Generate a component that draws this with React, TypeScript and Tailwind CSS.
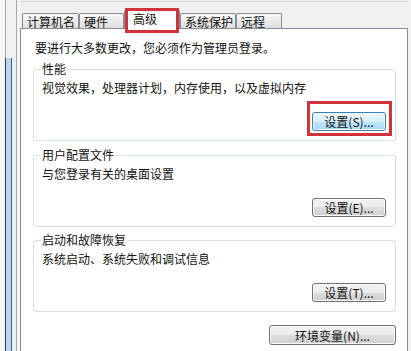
import React from "react";

const font = "font-['Noto_Sans_CJK_SC','Noto_Sans',sans-serif]";

const btnBase =
  "h-[19px] rounded-[3px] border text-[12px] leading-[17px] text-[#111] shadow-[inset_0_0_0_1px_#fbfbfb]";
const btnNormal =
  "border-[#707070] bg-[linear-gradient(to_bottom,#f2f2f2_0%,#ebebeb_50%,#dddddd_50%,#cfcfcf_100%)]";
const btnFocus =
  "border-[#3c7fb1] bg-[linear-gradient(to_bottom,#eaf6fd_0%,#d9f0fc_50%,#bee6fd_50%,#a7d9f5_100%)]";

function Group({
  title,
  desc,
  label,
  focused,
  className,
}: {
  title: string;
  desc: string;
  label: string;
  focused?: boolean;
  className?: string;
}) {
  return (
    <fieldset
      className={`border border-[#d5dfe5] rounded-[3px] pl-[8px] pr-[9px] pb-[9px] ${className ?? ""}`}
    >
      <legend className="-ml-[1px] px-[1px] leading-[16px]">{title}</legend>
      <p className="pt-[3px] leading-[16px]">{desc}</p>
      <div className="flex justify-end mt-[16px]">
        <div className="relative">
          <button className={`${btnBase} ${focused ? btnFocus : btnNormal} w-[74px]`}>
            {label}
          </button>
          {focused && (
            <span className="absolute -top-[11px] -left-[5px] -right-[6px] -bottom-[5px] border-[3px] border-[#d2323a]" />
          )}
        </div>
      </div>
    </fieldset>
  );
}

const tabs = [
  { name: "计算机名", w: "w-[57px]" },
  { name: "硬件", w: "w-[45px]" },
  { name: "高级", w: "w-[56px]", active: true },
  { name: "系统保护", w: "w-[56px]" },
  { name: "远程", w: "w-[46px]" },
];

export default function App() {
  return (
    <div className={`w-[411px] h-[351px] overflow-hidden flex bg-[#f0f0f0] text-[12px] text-[#111] ${font}`}>
      {/* window edge behind the dialog */}
      <div className="w-[20px] shrink-0 flex">
        <div className="w-[5px] bg-[#f6f6f6]" />
        <div className="w-[1px] bg-[linear-gradient(to_bottom,#a8a8a8_58px,#3d3d3d_58px)]" />
        <div className="w-[5px] bg-[linear-gradient(to_bottom,#f0f0f0_58px,#bcd4ee_58px)]" />
        <div className="w-[1px] bg-[linear-gradient(to_bottom,#f0f0f0_58px,#3f5f84_58px)]" />
        <div className="w-[4px] bg-[linear-gradient(to_bottom,#f0f0f0_58px,#e6eef7_58px)]" />
        <div className="w-[1px] bg-[#a9a9a9]" />
        <div className="w-[3px] bg-[#f4f4f4]" />
      </div>

      <div className="flex-1 flex flex-col pr-[3px]">
        <div className="mt-[1px] h-[1px] bg-[#cdd6df]" />

        {/* tabs */}
        <div className="mt-[8px] h-[18px] pl-[2px] flex items-end">
          {tabs.map((t) =>
            t.active ? (
              <div
                key={t.name}
                className={`relative z-10 -mb-[1px] h-[19px] ${t.w} border border-b-0 border-[#898c95] rounded-t-[2px] bg-white pl-[8px] leading-[16px]`}
              >
                {t.name}
                <span className="absolute -top-[3px] left-[0px] right-[0px] -bottom-[4px] border-[3px] border-[#d2323a]" />
              </div>
            ) : (
              <div
                key={t.name}
                className={`h-[15px] ${t.w} border border-b-0 border-[#898c95] rounded-t-[2px] bg-[linear-gradient(to_bottom,#f7f7f7,#dedede)] pl-[4px] pt-[1px] leading-[14px]`}
              >
                {t.name}
              </div>
            )
          )}
        </div>

        {/* page */}
        <div className="flex-1 bg-white border-t border-x border-[#898c95] pl-[12px] pr-[11px] flex flex-col">
          <p className="mt-[11px] pl-[2px] leading-[16px]">要进行大多数更改，您必须作为管理员登录。</p>

          <Group
            className="mt-[5px]"
            title="性能"
            desc="视觉效果，处理器计划，内存使用，以及虚拟内存"
            label="设置(S)..."
            focused
          />
          <Group
            className="mt-[6px]"
            title="用户配置文件"
            desc="与您登录有关的桌面设置"
            label="设置(E)..."
          />
          <Group
            className="mt-[5px]"
            title="启动和故障恢复"
            desc="系统启动、系统失败和调试信息"
            label="设置(T)..."
          />

          <div className="flex justify-end mt-[13px]">
            <button className={`${btnBase} ${btnNormal} h-[20px] w-[127px]`}>环境变量(N)...</button>
          </div>
        </div>
      </div>
    </div>
  );
}
